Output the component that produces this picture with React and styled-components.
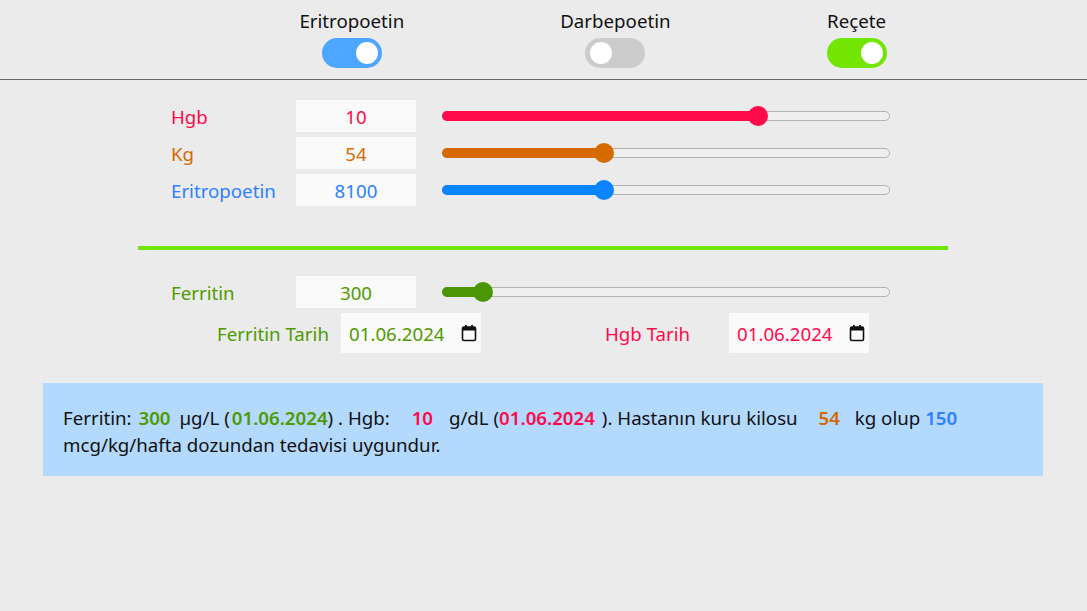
import React, { useState } from "react";
import styled, { createGlobalStyle } from "styled-components";

const GlobalStyle = createGlobalStyle`
  html, body {
    margin: 0;
    padding: 0;
    background: #ebebeb;
  }
  body {
    font-family: "Noto Sans", "Open Sans", sans-serif;
    color: #111;
  }
`;

const FS = "18.7px";

const COLORS = {
  hgb: "#ff0a4b",
  kg: "#d46a00",
  epo: "#2f80ff",
  epoBar: "#0a84ff",
  fer: "#4f9a00",
  ferBar: "#4b9607",
};

// Header with toggles
const Header = styled.div`
  display: flex;
  justify-content: center;
  gap: 156px;
  padding: 9px 0 11px 99px;
  border-bottom: 1px solid #666;
`;

const ToggleItem = styled.div`
  display: flex;
  flex-direction: column;
  align-items: center;
  gap: 5px;
`;

const ToggleLabel = styled.div`
  font-size: ${FS};
  line-height: 24px;
  color: #111;
`;

const Switch = styled.button`
  position: relative;
  width: 60px;
  height: 30px;
  border: none;
  padding: 0;
  border-radius: 15px;
  background: ${(p) => (p.$on ? p.$color : "#cccccc")};
  cursor: pointer;

  &::after {
    content: "";
    position: absolute;
    top: 4px;
    left: ${(p) => (p.$on ? "34px" : "5px")};
    width: 22px;
    height: 22px;
    border-radius: 50%;
    background: #fff;
  }
`;

// Main form
const Form = styled.div`
  width: 810px;
  margin: 0 0 0 138px;
  padding-top: 20px;
`;

const Rows = styled.div`
  display: flex;
  flex-direction: column;
  gap: 5px;
`;

const Row = styled.div`
  display: flex;
  align-items: center;
  height: 32px;
  padding-left: 33px;
`;

const Label = styled.div`
  width: 125px;
  font-size: ${FS};
  color: ${(p) => p.$color};
`;

const ValueBox = styled.input`
  width: 120px;
  height: 32px;
  box-sizing: border-box;
  border: none;
  outline: none;
  background: #fafafa;
  text-align: center;
  font-family: inherit;
  font-size: ${FS};
  color: ${(p) => p.$color};
  margin-right: 26px;
`;

const Track = styled.div`
  position: relative;
  width: 448px;
  height: 10px;
  box-sizing: border-box;
  border: 1px solid #b3b3b3;
  border-radius: 5px;
  background: #efefef;
`;

const Fill = styled.div`
  position: absolute;
  top: -1px;
  bottom: -1px;
  left: -1px;
  border-radius: 5px;
  background: ${(p) => p.$color};
`;

const Thumb = styled.div`
  position: absolute;
  top: 50%;
  width: 20px;
  height: 20px;
  margin-top: -10px;
  margin-left: -1px;
  border-radius: 50%;
  background: ${(p) => p.$color};
`;

const Divider = styled.div`
  height: 4px;
  background: #6ee600;
  margin: 40px 0 26px;
`;

const DateRow = styled.div`
  display: flex;
  align-items: center;
  margin-top: 5px;
  padding-left: 79px;
`;

const DateGroup = styled.div`
  display: flex;
  align-items: center;
  & + & {
    margin-left: 124px;
  }
`;

const DateLabel = styled.div`
  width: 124px;
  font-size: ${FS};
  color: ${(p) => p.$color};
`;

const DateField = styled.div`
  width: 140px;
  height: 40px;
  box-sizing: border-box;
  padding: 0 4px 0 8px;
  background: #fafafa;
  display: flex;
  align-items: center;
  justify-content: space-between;
  font-size: ${FS};
  color: ${(p) => p.$color};
`;

const InfoBox = styled.div`
  width: 1000px;
  box-sizing: border-box;
  margin: 30px 0 0 43px;
  padding: 21px 20px 18px;
  background: #b3d9fd;
  font-size: ${FS};
  line-height: 27px;
  color: #111;
`;

const Val = styled.span`
  font-weight: 600;
  color: ${(p) => p.$color};
  margin-left: ${(p) => p.$ml || 0}px;
  margin-right: ${(p) => p.$mr || 0}px;
`;

const CalendarIcon = () => (
  <svg width="16" height="18" viewBox="0 0 16 18" fill="none">
    <rect x="1.5" y="3" width="13" height="13.5" rx="1.5" stroke="#111" strokeWidth="1.6" />
    <rect x="1.5" y="3" width="13" height="3.5" fill="#111" />
    <rect x="4" y="1" width="1.8" height="3" fill="#111" />
    <rect x="10.2" y="1" width="1.8" height="3" fill="#111" />
  </svg>
);

const Slider = ({ value, min, max, color }) => {
  const p = Math.max(0, Math.min(1, (value - min) / (max - min)));
  const left = `calc(${p} * (100% - 18px))`;
  return (
    <Track>
      <Fill $color={color} style={{ width: `calc(${p} * (100% - 18px) + 12px)` }} />
      <Thumb $color={color} style={{ left }} />
    </Track>
  );
};

const Toggle = ({ label, on, color, onClick }) => (
  <ToggleItem>
    <ToggleLabel>{label}</ToggleLabel>
    <Switch $on={on} $color={color} onClick={onClick} />
  </ToggleItem>
);

const App = () => {
  const [epo, setEpo] = useState(true);
  const [darbe, setDarbe] = useState(false);
  const [recete, setRecete] = useState(true);

  const hgb = 10;
  const kg = 54;
  const dose = 8100;
  const ferritin = 300;

  return (
    <>
      <GlobalStyle />
      <Header>
        <Toggle label="Eritropoetin" on={epo} color="#4da6ff" onClick={() => setEpo(!epo)} />
        <Toggle label="Darbepoetin" on={darbe} color="#4da6ff" onClick={() => setDarbe(!darbe)} />
        <Toggle label="Reçete" on={recete} color="#72e600" onClick={() => setRecete(!recete)} />
      </Header>

      <Form>
        <Rows>
          <Row>
            <Label $color={COLORS.hgb}>Hgb</Label>
            <ValueBox $color={COLORS.hgb} defaultValue={hgb} />
            <Slider value={hgb} min={0} max={14} color={COLORS.hgb} />
          </Row>
          <Row>
            <Label $color={COLORS.kg}>Kg</Label>
            <ValueBox $color={COLORS.kg} defaultValue={kg} />
            <Slider value={kg} min={0} max={152} color={COLORS.kg} />
          </Row>
          <Row>
            <Label $color={COLORS.epo}>Eritropoetin</Label>
            <ValueBox $color={COLORS.epo} defaultValue={dose} />
            <Slider value={dose} min={0} max={22800} color={COLORS.epoBar} />
          </Row>
        </Rows>

        <Divider />

        <Row>
          <Label $color={COLORS.fer}>Ferritin</Label>
          <ValueBox $color={COLORS.fer} defaultValue={ferritin} />
          <Slider value={ferritin} min={0} max={4160} color={COLORS.ferBar} />
        </Row>

        <DateRow>
          <DateGroup>
            <DateLabel $color={COLORS.fer}>Ferritin Tarih</DateLabel>
            <DateField $color={COLORS.fer}>
              01.06.2024
              <CalendarIcon />
            </DateField>
          </DateGroup>
          <DateGroup>
            <DateLabel $color={COLORS.hgb}>Hgb Tarih</DateLabel>
            <DateField $color={COLORS.hgb}>
              01.06.2024
              <CalendarIcon />
            </DateField>
          </DateGroup>
        </DateRow>
      </Form>

      <InfoBox>
        Ferritin: <Val $color={COLORS.fer} $ml={2} $mr={4}>{ferritin}</Val> µg/L (
        <Val $color={COLORS.fer} $ml={2}>01.06.2024</Val>) . Hgb:{" "}
        <Val $color={COLORS.hgb} $ml={17} $mr={11}>{hgb}</Val> g/dL (
        <Val $color={COLORS.hgb} $mr={2}>01.06.2024</Val> ). Hastanın kuru kilosu{" "}
        <Val $color={COLORS.kg} $ml={16} $mr={10}>{kg}</Val> kg olup{" "}
        <Val $color={COLORS.epo}>150</Val>
        <br />
        mcg/kg/hafta dozundan tedavisi uygundur.
      </InfoBox>
    </>
  );
};

export default App;
